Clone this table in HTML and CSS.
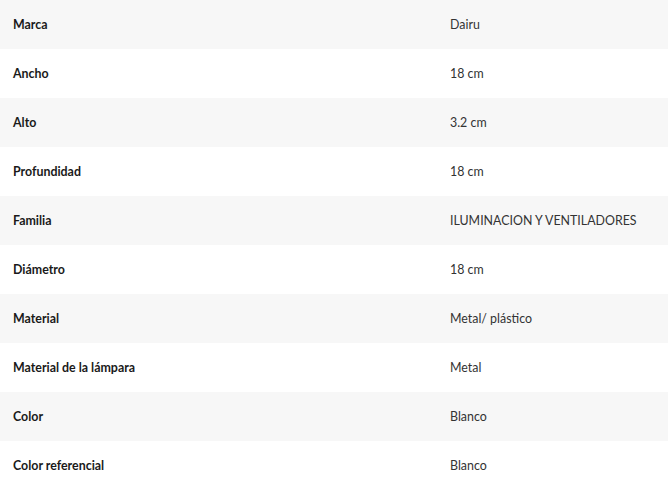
FILE: index.html
```html
<!DOCTYPE html>
<html lang="es">
<head>
<meta charset="utf-8">
<link rel="stylesheet" href="styles.css">
</head>
<body>
<table class="specs">
  <tbody>
    <tr><th>Marca</th><td>Dairu</td></tr>
    <tr><th>Ancho</th><td>18 cm</td></tr>
    <tr><th>Alto</th><td>3.2 cm</td></tr>
    <tr><th>Profundidad</th><td>18 cm</td></tr>
    <tr><th>Familia</th><td>ILUMINACION Y VENTILADORES</td></tr>
    <tr><th>Diámetro</th><td>18 cm</td></tr>
    <tr><th>Material</th><td>Metal/ plástico</td></tr>
    <tr><th>Material de la lámpara</th><td>Metal</td></tr>
    <tr><th>Color</th><td>Blanco</td></tr>
    <tr><th>Color referencial</th><td>Blanco</td></tr>
  </tbody>
</table>
</body>
</html>
```

FILE: styles.css
```css
html, body {
  margin: 0;
  padding: 0;
  background: #ffffff;
}
body {
  font-family: Lato, "Open Sans", Arial, sans-serif;
  font-size: 12.4px;
}
.specs {
  width: 668px;
  border-collapse: collapse;
  table-layout: fixed;
}
.specs tr {
  height: 49px;
}
.specs tr:nth-child(odd) {
  background: #f7f7f7;
}
.specs th,
.specs td {
  padding: 0 13px;
  text-align: left;
  vertical-align: middle;
  line-height: 16px;
}
.specs th {
  width: 411px;
  font-weight: 700;
  color: #1a1a1a;
}
.specs td {
  font-weight: 400;
  color: #333333;
}
```
